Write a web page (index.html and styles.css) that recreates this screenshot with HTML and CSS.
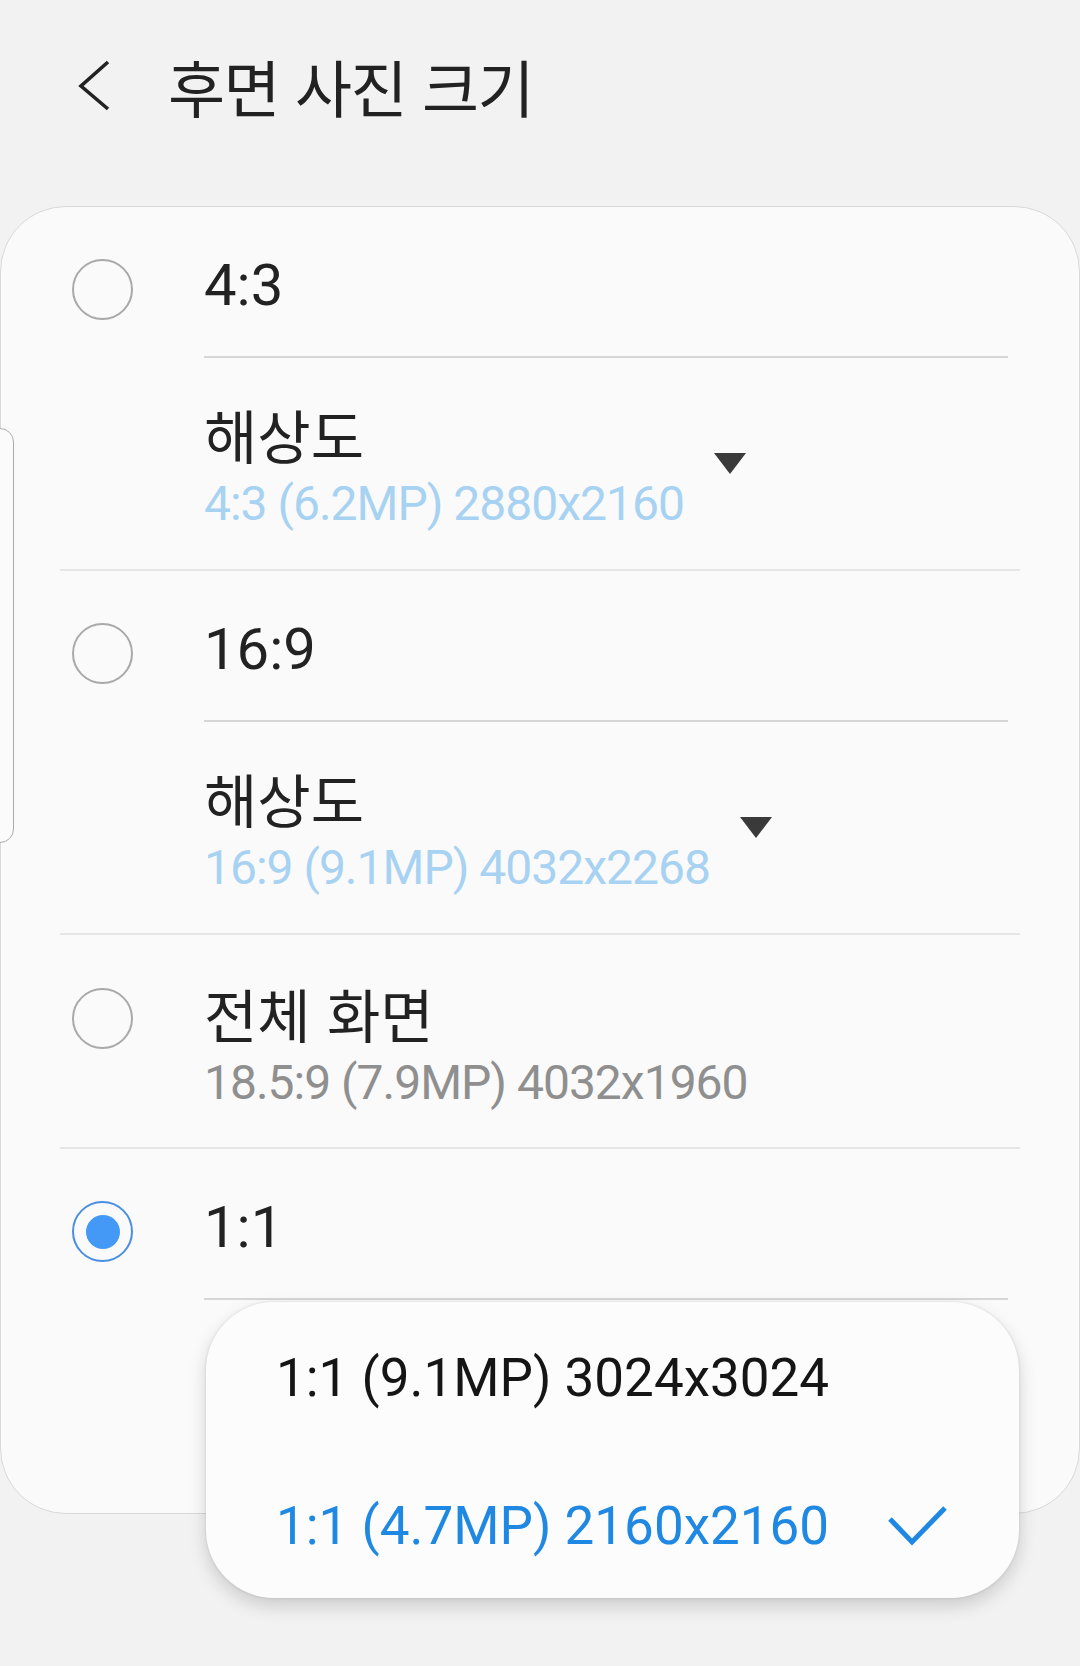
FILE: index.html
```html
<!DOCTYPE html>
<html lang="ko">
<head>
<meta charset="utf-8">
<title>후면 사진 크기</title>
<link rel="stylesheet" href="styles.css">
</head>
<body>
<div class="screen">
  <header class="header">
    <svg class="back" width="40" height="60" viewBox="0 0 40 60" aria-hidden="true">
      <polyline points="32,6 5,30 32,53" fill="none" stroke="#222" stroke-width="3.6" stroke-linejoin="miter"/>
    </svg>
    <h1 class="page-title">후면 사진 크기</h1>
  </header>

  <div class="card">
    <div class="opt-head">
      <span class="radio"></span>
      <span class="opt-title">4:3</span>
    </div>
    <div class="sep sep-inner"></div>
    <div class="sub">
      <div class="sub-text">
        <div class="ko-title">해상도</div>
        <div class="sub-value sub-blue">4:3 (6.2MP) 2880x2160</div>
      </div>
      <span class="tri"></span>
    </div>
    <div class="sep sep-outer"></div>

    <div class="opt-head">
      <span class="radio"></span>
      <span class="opt-title">16:9</span>
    </div>
    <div class="sep sep-inner"></div>
    <div class="sub">
      <div class="sub-text">
        <div class="ko-title">해상도</div>
        <div class="sub-value sub-blue">16:9 (9.1MP) 4032x2268</div>
      </div>
      <span class="tri"></span>
    </div>
    <div class="sep sep-outer"></div>

    <div class="opt-full">
      <span class="radio radio-full"></span>
      <div class="full-text">
        <div class="ko-title">전체 화면</div>
        <div class="sub-value sub-gray">18.5:9 (7.9MP) 4032x1960</div>
      </div>
    </div>
    <div class="sep sep-outer"></div>

    <div class="opt-head">
      <span class="radio radio-on"><span class="dot"></span></span>
      <span class="opt-title">1:1</span>
    </div>
    <div class="sep sep-inner"></div>
    <div class="sub-spacer"></div>
  </div>

  <div class="handle"></div>

  <div class="popup">
    <div class="pop-item">1:1 (9.1MP) 3024x3024</div>
    <div class="pop-item pop-selected">
      <span>1:1 (4.7MP) 2160x2160</span>
      <svg class="check" width="60" height="40" viewBox="0 0 60 40" aria-hidden="true">
        <polyline points="2,13 24,36 57,2" fill="none" stroke="#1f88e2" stroke-width="5"/>
      </svg>
    </div>
  </div>
</div>
</body>
</html>
```

FILE: styles.css
```css
html, body {
  margin: 0;
  padding: 0;
  background: #f2f2f2;
}

.screen {
  position: relative;
  width: 1080px;
  height: 1666px;
  overflow: hidden;
  background: #f2f2f2;
  font-family: Roboto, "Noto Sans CJK KR", sans-serif;
  color: #222;
}

.header {
  box-sizing: border-box;
  height: 206px;
  display: flex;
  align-items: flex-start;
  padding: 56px 0 0 76px;
}

.back {
  display: block;
  flex: none;
}

.page-title {
  margin: -1px 0 0 52px;
  font-family: "Noto Sans CJK KR", sans-serif;
  font-weight: 400;
  font-size: 62px;
  line-height: 62px;
  letter-spacing: -1.5px;
  color: #222;
}

.card {
  box-sizing: border-box;
  width: 1080px;
  background: #fafafa;
  border: 1px solid #d9d9d9;
  border-radius: 66px;
}

.opt-head {
  display: flex;
  align-items: flex-start;
  height: 149px;
}

.radio {
  box-sizing: border-box;
  flex: none;
  width: 61px;
  height: 61px;
  margin: 52px 0 0 71px;
  border: 2.5px solid #a9a9a9;
  border-radius: 50%;
  display: flex;
  align-items: center;
  justify-content: center;
}

.radio-on {
  border-color: #4a90e2;
}

.dot {
  width: 34px;
  height: 34px;
  border-radius: 50%;
  background: #4499f6;
}

.opt-title {
  margin: 49px 0 0 71px;
  font-family: Roboto, sans-serif;
  font-size: 58px;
  line-height: 58px;
  color: #222;
}

.sep {
  height: 2px;
}

.sep-inner {
  margin-left: 203px;
  width: 804px;
  background: #d6d6d6;
}

.sep-outer {
  margin-left: 59px;
  width: 960px;
  background: #e6e6e6;
}

.sub {
  box-sizing: border-box;
  height: 211px;
  display: flex;
  align-items: center;
  padding-left: 203px;
}

.sub-text {
  align-self: flex-start;
  padding-top: 47px;
}

.ko-title {
  font-family: "Noto Sans CJK KR", sans-serif;
  font-size: 58px;
  line-height: 58px;
  letter-spacing: 0;
  color: #222;
  white-space: nowrap;
}

.sub-value {
  margin-top: 17px;
  font-family: Roboto, sans-serif;
  font-size: 48px;
  line-height: 48px;
  letter-spacing: -1px;
  white-space: nowrap;
}

.sub-blue {
  color: #a8d2f2;
}

.sub-gray {
  color: #8f8f8f;
}

.tri {
  width: 0;
  height: 0;
  margin-left: 30px;
  border-left: 16px solid transparent;
  border-right: 16px solid transparent;
  border-top: 21px solid #3a3a3a;
}

.opt-full {
  display: flex;
  align-items: flex-start;
  height: 212px;
}

.radio-full {
  margin-top: 53px;
}

.full-text {
  margin: 49px 0 0 71px;
}

.sub-spacer {
  height: 213px;
}

.handle {
  position: absolute;
  left: -20px;
  top: 428px;
  width: 34px;
  height: 415px;
  box-sizing: border-box;
  border: 1.5px solid #ababab;
  border-radius: 14px;
  background: #fbfbfb;
}

.popup {
  position: absolute;
  left: 206px;
  top: 1302px;
  width: 813px;
  height: 296px;
  box-sizing: border-box;
  padding-top: 2px;
  background: #fcfcfc;
  border-radius: 68px;
  box-shadow: 0 0 3px rgba(0, 0, 0, 0.12), 0 8px 18px rgba(0, 0, 0, 0.16);
}

.pop-item {
  height: 148px;
  display: flex;
  align-items: center;
  padding-left: 70px;
  font-family: Roboto, sans-serif;
  font-size: 53px;
  line-height: 53px;
  color: #151515;
  white-space: nowrap;
}

.pop-selected {
  color: #1f88e2;
}

.check {
  display: block;
  margin-left: 59px;
}
```
